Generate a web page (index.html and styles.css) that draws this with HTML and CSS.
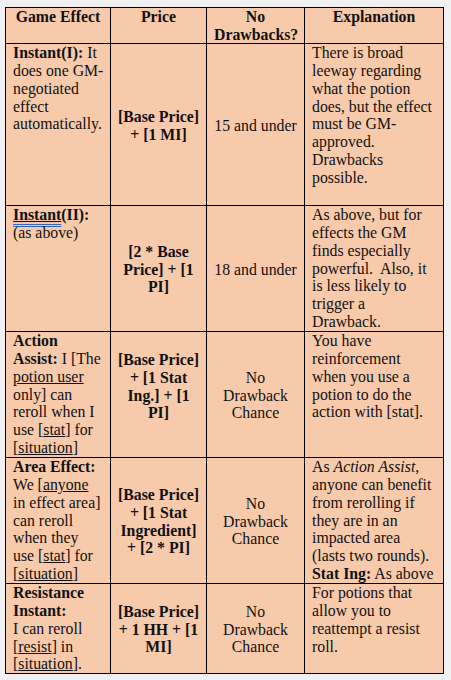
FILE: index.html
```html
<!DOCTYPE html>
<html>
<head>
<meta charset="utf-8">
<link rel="stylesheet" href="styles.css">
</head>
<body>
<div class="sheet">
  <div class="cell head"><p>Game Effect</p></div>
  <div class="cell head"><p>Price</p></div>
  <div class="cell head"><p>No<br>Drawbacks?</p></div>
  <div class="cell head"><p>Explanation</p></div>

  <div class="cell"><p><b>Instant(I):</b> It<br>does one GM-<br>negotiated<br>effect<br>automatically.</p></div>
  <div class="cell mid bold"><p>[Base Price]<br>+ [1 MI]</p></div>
  <div class="cell mid"><p>15 and under</p></div>
  <div class="cell"><p>There is broad<br>leeway regarding<br>what the potion<br>does, but the effect<br>must be GM-<br>approved.<br>Drawbacks<br>possible.</p></div>

  <div class="cell"><p><b><span class="gram"><u>Instant</u></span>(II):</b><br>(as above)</p></div>
  <div class="cell mid bold"><p>[2 * Base<br>Price] + [1<br>PI]</p></div>
  <div class="cell mid"><p>18 and under</p></div>
  <div class="cell"><p>As above, but for<br>effects the GM<br>finds especially<br>powerful.&nbsp; Also, it<br>is less likely to<br>trigger a<br>Drawback.</p></div>

  <div class="cell"><p><b>Action<br>Assist:</b> I [The<br><u>potion user</u><br>only] can<br>reroll when I<br>use [<u>stat</u>] for<br>[<u>situation</u>]</p></div>
  <div class="cell mid bold"><p>[Base Price]<br>+ [1 Stat<br>Ing.] + [1<br>PI]<br>&nbsp;</p></div>
  <div class="cell mid"><p>No<br>Drawback<br>Chance</p></div>
  <div class="cell"><p>You have<br>reinforcement<br>when you use a<br>potion to do the<br>action with [stat].</p></div>

  <div class="cell"><p><b>Area Effect:</b><br>We [<u>anyone</u><br>in effect area]<br>can reroll<br>when they<br>use [<u>stat</u>] for<br>[<u>situation</u>]</p></div>
  <div class="cell mid bold"><p>[Base Price]<br>+ [1 Stat<br>Ingredient]<br>+ [2 * PI]</p></div>
  <div class="cell mid"><p>No<br>Drawback<br>Chance</p></div>
  <div class="cell"><p>As <i>Action Assist</i>,<br>anyone can benefit<br>from rerolling if<br>they are in an<br>impacted area<br>(lasts two rounds).<br><b>Stat Ing:</b> As above</p></div>

  <div class="cell"><p><b>Resistance<br>Instant:</b><br>I can reroll<br>[<u>resist</u>] in<br>[<u>situation</u>].</p></div>
  <div class="cell mid bold"><p>[Base Price]<br>+ 1 HH + [1<br>MI]</p></div>
  <div class="cell mid"><p>No<br>Drawback<br>Chance</p></div>
  <div class="cell"><p>For potions that<br>allow you to<br>reattempt a resist<br>roll.</p></div>
</div>
</body>
</html>
```
FILE: styles.css
```css
html, body {
  margin: 0;
  padding: 0;
  background: #f0f0f0;
}

body {
  padding: 7px 0 0 5px;
  font-family: "Liberation Serif", "Times New Roman", serif;
  font-size: 15.8px;
  line-height: 17.85px;
  color: #111;
}

.sheet {
  display: grid;
  grid-template-columns: 104px 95px 97px 138px;
  grid-template-rows: 35px 161px 125px 125px 125px 89px;
  gap: 1px;
  padding: 1px;
  background: #000;
  width: max-content;
}

.cell {
  background: #f7caac;
  padding: 0 7px;
  white-space: nowrap;
  overflow: hidden;
}

.cell p {
  margin: 0;
}

.head {
  font-weight: bold;
  text-align: center;
}

.mid {
  display: flex;
  flex-direction: column;
  justify-content: center;
  align-items: center;
  text-align: center;
  padding-top: 2px;
}

.bold {
  font-weight: bold;
}

u {
  text-decoration: underline;
  text-underline-offset: 1px;
}

.gram {
  text-decoration: underline double #3563c9;
  text-underline-offset: 3.5px;
  text-decoration-thickness: 1px;
}
```
